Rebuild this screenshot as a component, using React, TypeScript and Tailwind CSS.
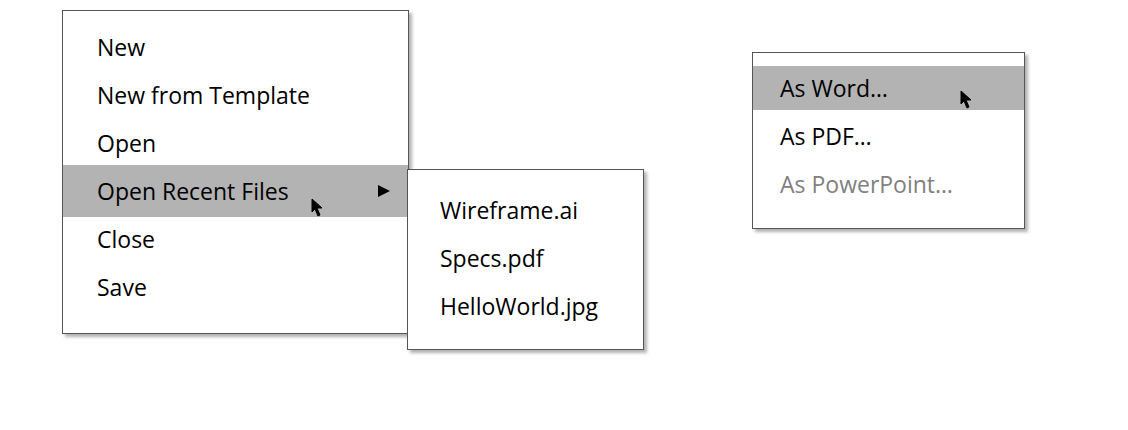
function Cursor() {
  return (
    <svg width="13" height="20" viewBox="0 0 13 20">
      <path d="M1 1 L1 14 L4 11 L7 18 L9 17 L6 10 L11 10 Z" fill="#000" stroke="#000" strokeWidth="1" strokeLinejoin="round" />
    </svg>
  )
}

const menuBox = 'border border-[#555] bg-white shadow-[3px_3px_3px_rgba(0,0,0,0.3)]'

export default function App() {
  return (
    <div className="relative h-[430px] w-[1128px] bg-white text-[23px] text-black" style={{ fontFamily: '"Open Sans", sans-serif' }}>
      <div className="flex items-start pl-[62px] pt-[10px]">
        <div className={`relative h-[324px] w-[347px] pt-[12px] ${menuBox}`}>
          <div className="flex h-12 items-center pl-[34px]">New</div>
          <div className="flex h-12 items-center pl-[34px]">New from Template</div>
          <div className="flex h-12 items-center pl-[34px]">Open</div>
          <div className="relative -my-[2px] flex h-[52px] items-center justify-between bg-[#b3b3b3] pl-[34px] pr-[18px]">
            <span>Open Recent Files</span>
            <svg width="12" height="12" viewBox="0 0 12 12">
              <path d="M0 0 L12 6 L0 12 Z" fill="#000" />
            </svg>
            <div className="absolute left-[248px] top-[33px] leading-none"><Cursor /></div>
          </div>
          <div className="flex h-12 items-center pl-[34px]">Close</div>
          <div className="flex h-12 items-center pl-[34px]">Save</div>

          <div className={`absolute left-[344px] top-[158px] h-[181px] w-[237px] pt-[16px] ${menuBox}`}>
            <div className="flex h-12 items-center pl-[32px]">Wireframe.ai</div>
            <div className="flex h-12 items-center pl-[32px]">Specs.pdf</div>
            <div className="flex h-12 items-center pl-[32px]">HelloWorld.jpg</div>
          </div>
        </div>

        <div className={`ml-[343px] mt-[42px] h-[177px] w-[273px] pt-[13px] ${menuBox}`}>
          <div className="relative flex h-[44px] items-center bg-[#b3b3b3] pl-[27px]">
            As Word…
            <div className="absolute left-[207px] top-[24px] leading-none"><Cursor /></div>
          </div>
          <div className="mt-1 flex h-[44px] items-center pl-[27px]">As PDF…</div>
          <div className="mt-1 flex h-[44px] items-center pl-[27px] text-[#808080]">As PowerPoint…</div>
        </div>
      </div>
    </div>
  )
}
